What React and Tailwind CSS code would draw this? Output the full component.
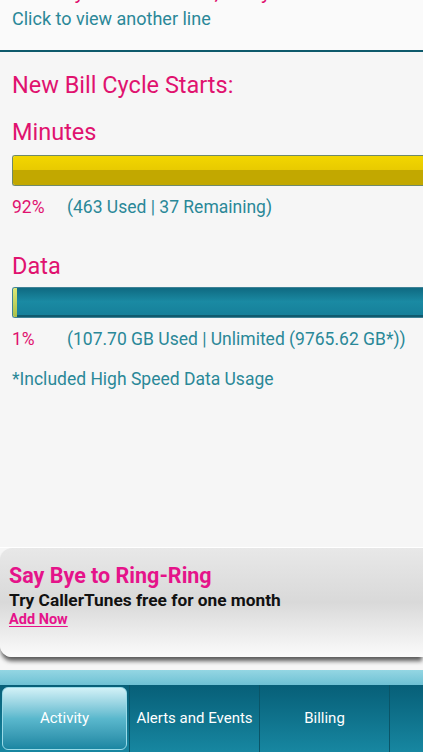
import React from 'react'

export default function App() {
  const tabs = ['Activity', 'Alerts and Events', 'Billing', '']
  return (
    <div className="w-full h-[752px] overflow-hidden flex flex-col bg-[#f6f6f6] font-['Roboto','Noto_Sans',sans-serif]">
      <div className="h-[52px] shrink-0 bg-[#fafafa] border-b-2 border-[#0e5a6c] px-3 overflow-hidden">
        <div className="-mt-[20px] text-[21px] leading-[24px] text-[#e0126f] whitespace-nowrap">Primary Mobile Line 2, Jerry</div>
        <div className="mt-[4px] text-[18px] leading-[22px] text-[#2a8898]">Click to view another line</div>
      </div>

      <div className="pl-3 mt-[20px] text-[23.5px] leading-[27px] text-[#e0126f]">New Bill Cycle Starts:</div>
      <div className="pl-3 mt-[20px] text-[23.5px] leading-[27px] text-[#e0126f]">Minutes</div>
      <div className="mt-[9px] ml-3 h-[31px] border border-r-0 border-[#6f8a6a] rounded-l-[3px] overflow-hidden flex flex-col">
        <div className="h-[14px] bg-gradient-to-b from-[#f2d600] to-[#e8ca00]" />
        <div className="flex-1 bg-[#c2a800]" />
      </div>
      <div className="pl-3 mt-[10px] text-[17.5px] leading-[22px] flex">
        <span className="w-[55px] text-[#e0126f]">92%</span>
        <span className="text-[#2a8898]">(463 Used | 37 Remaining)</span>
      </div>

      <div className="pl-3 mt-[35px] text-[23.5px] leading-[27px] text-[#e0126f]">Data</div>
      <div className="mt-[7px] ml-3 h-[31px] border border-r-0 border-[#3f8296] rounded-l-[3px] overflow-hidden flex">
        <div className="w-[4px] bg-gradient-to-b from-[#dce878] to-[#a8bf48]" />
        <div className="flex-1 bg-gradient-to-b from-[#0f6a82] via-[#1a8aa3] to-[#16809a] border-b-2 border-[#0f5a6e]" />
      </div>
      <div className="pl-3 mt-[10px] text-[17.5px] leading-[22px] flex">
        <span className="w-[55px] text-[#e0126f]">1%</span>
        <span className="text-[#2a8898]">(107.70 GB Used | Unlimited (9765.62 GB*))</span>
      </div>
      <div className="pl-3 mt-[18px] text-[17.5px] leading-[22px] text-[#2a8898]">*Included High Speed Data Usage</div>

      <div className="flex-1" />

      <div className="shrink-0 border-t border-white">
        <div className="h-[109px] rounded-l-[12px] bg-gradient-to-b from-[#e8e8e8] via-[#d9d9d9] to-[#fbfbfb] shadow-[0_5px_4px_-1px_rgba(40,40,40,0.75)] pl-[9px] pt-[15px] font-bold">
          <div className="text-[21.5px] leading-[26px] text-[#e5138a]">Say Bye to Ring-Ring</div>
          <div className="mt-[1px] text-[17.3px] leading-[20px] text-[#111]">Try CallerTunes free for one month</div>
          <div className="mt-[2px] text-[14.5px] leading-[16px] text-[#e5138a] underline underline-offset-2">Add Now</div>
        </div>
      </div>

      <div className="h-[13px] shrink-0" />
      <div className="h-[15px] shrink-0 bg-gradient-to-b from-[#94d6e3] to-[#6ec1d4]" />
      <div className="h-[67px] shrink-0 flex bg-gradient-to-b from-[#075f78] to-[#1787a1]">
        {tabs.map((t, i) => (
          <div key={i} className={`h-full flex items-center ${i === 3 ? 'flex-1' : 'w-[130px]'} ${i < 3 ? 'border-r border-[#0a5568]' : ''}`}>
            {i === 0 ? (
              <div className="m-[2px] h-[63px] flex-1 rounded-[6px] border border-[#9adbe8] bg-gradient-to-b from-[#d2f1f7] via-[#5ab8cd] to-[#1a86a2] flex items-center justify-center text-[15px] text-white">
                {t}
              </div>
            ) : (
              <div className="flex-1 text-center text-[15px] text-white">{t}</div>
            )}
          </div>
        ))}
      </div>
    </div>
  )
}
